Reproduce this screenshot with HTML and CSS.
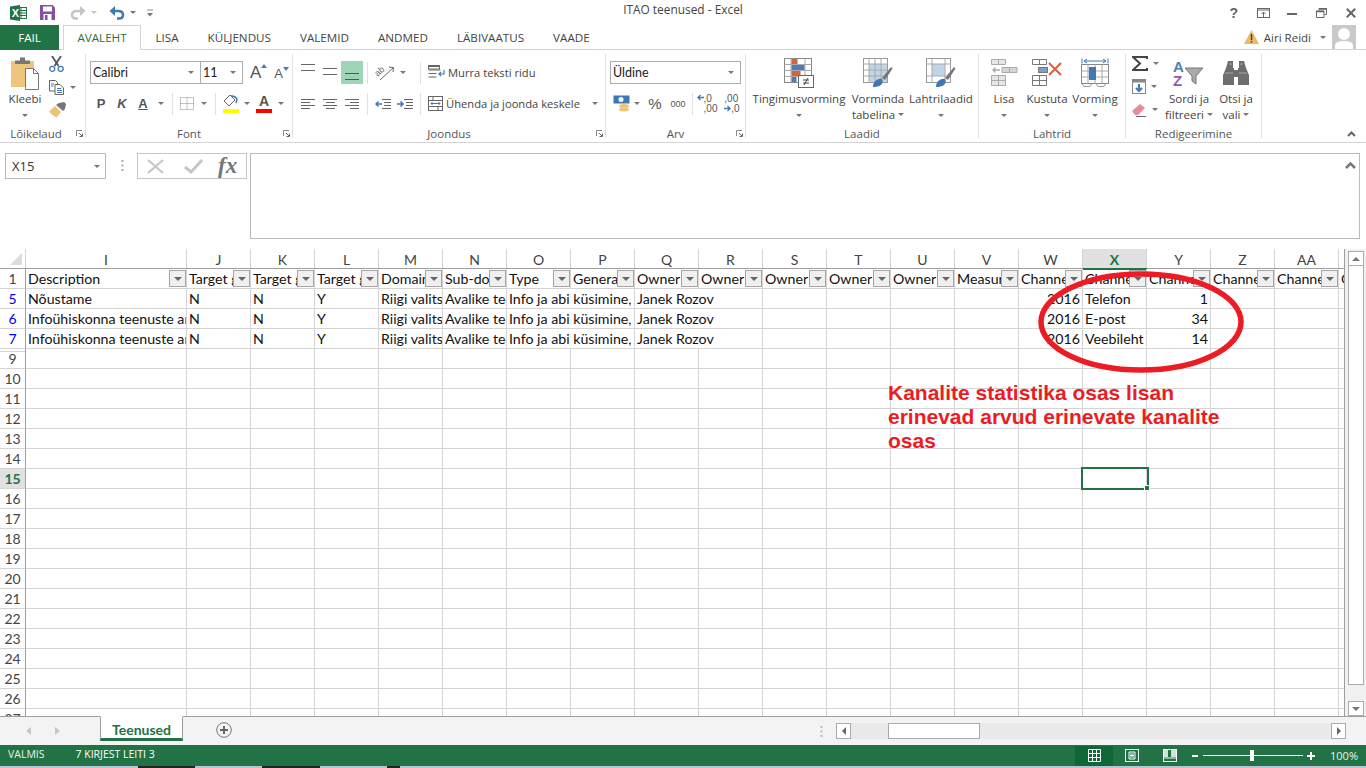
FILE: index.html
```html
<!DOCTYPE html>
<html lang="et">
<head>
<meta charset="utf-8">
<title>ITAO teenused - Excel</title>
<link rel="stylesheet" href="styles.css">
</head>
<body>
<div class="app">
  <header class="titlebar">
    <div class="qat">
      <svg class="q-xl" width="17" height="16" viewBox="0 0 17 16"><rect x="6.5" y="2.5" width="10" height="11" fill="#fff" stroke="#217346"/><path d="M11 2v12M6 5.5h11M6 8h11M6 10.5h11" stroke="#217346" stroke-width="1"/><path d="M0 1.5 10 0v16L0 14.500z" fill="#217346"/><text x="1.800" y="12" class="xl-x">X</text></svg>
      <svg class="q-save" width="15" height="15" viewBox="0 0 15 15"><path d="M0 0h12.500L15 2.500V15H0z" fill="#864ea5"/><rect x="3" y="1.500" width="9" height="5" fill="#fff"/><rect x="3.500" y="9" width="8" height="6" fill="#fff"/><rect x="5" y="10" width="2.500" height="5" fill="#864ea5"/></svg>
      <svg class="q-redo" width="16" height="14" viewBox="0 0 16 14"><path d="M11 5H7C3.500 5 2 7 2 9c0 2 1.500 3.500 4 3.500h2" fill="none" stroke="#c4c4c4" stroke-width="2.500"/><path d="M10 0l5.500 5L10 10z" fill="#c4c4c4"/></svg>
      <span class="caret caret-light q-c1"></span>
      <svg class="q-undo" width="16" height="14" viewBox="0 0 16 14"><path d="M5 5h4c3.500 0 5 2 5 4s-1.500 3.500-4 3.500H8" fill="none" stroke="#3f78b5" stroke-width="2.500"/><path d="M6 0 .5 5 6 10z" fill="#3f78b5"/></svg>
      <span class="caret q-c2"></span>
      <svg class="q-cust" width="6" height="8" viewBox="0 0 7 8"><path d="M0 .5h7" stroke="#777"/><path d="M0 4h7L3.500 8z" fill="#777"/></svg>
    </div>
    <div class="doc-title">ITAO teenused - Excel</div>
    <div class="winctl">
      <span class="help">?</span>
      <svg width="14" height="10" viewBox="0 0 14 10"><rect x=".5" y=".5" width="12" height="9" fill="none" stroke="#666"/><path d="M.5 2h12" stroke="#666"/><path d="M6.500 9V4M4.500 6l2-2 2 2" fill="none" stroke="#666"/></svg>
      <svg width="10" height="10" viewBox="0 0 10 10"><rect y="5" width="10" height="2" fill="#666"/></svg>
      <svg width="11" height="10" viewBox="0 0 11 10"><path d="M3 2V.5h7.500v6H8.500M.5 3h7.500v6.500H.5z" fill="none" stroke="#666"/><path d="M3 1h8M.5 3.500h7.500" stroke="#666" stroke-width="1.500"/></svg>
      <svg width="10" height="10" viewBox="0 0 10 10"><path d="M.8.800l8.400 8.400M9.200.8.800 9.200" stroke="#666" stroke-width="2"/></svg>
    </div>
  </header>

  <nav class="tabs">
    <span class="tab file">FAIL</span>
    <span class="tab active">AVALEHT</span>
    <span class="tab">LISA</span>
    <span class="tab">KÜLJENDUS</span>
    <span class="tab">VALEMID</span>
    <span class="tab">ANDMED</span>
    <span class="tab">LÄBIVAATUS</span>
    <span class="tab">VAADE</span>
    <div class="account">
      <svg width="15" height="14" viewBox="0 0 15 14"><path d="M7.500 0 15 14H0z" fill="#eab96b"/><rect x="6.800" y="4" width="1.500" height="6" fill="#444"/><rect x="6.800" y="11" width="1.500" height="1.500" fill="#444"/></svg>
      <span class="acct-name">Airi Reidi</span>
      <span class="caret"></span>
      <svg class="avatar" width="24" height="24" viewBox="0 0 24 24"><rect width="24" height="24" fill="#c9c9c9"/><circle cx="12" cy="9" r="6" fill="#fff"/><path d="M3 24v-4c0-3 5-4 9-4s9 1 9 4v4z" fill="#fff"/></svg>
    </div>
  </nav>

  <section class="ribbon">
    <div class="grp g-clip">
      <div class="grp-body clip-body">
        <div class="big">
          <div class="big-ico">
            <svg width="30" height="34" viewBox="0 0 30 34"><rect x="1" y="5" width="23" height="26" fill="#eec67b"/><path d="M5 8V4.500h5V1.500h5v3h5V8z" fill="#777"/><path d="M15.500 12.500h8l5 5v16h-13z" fill="#fff" stroke="#777"/><path d="M23.500 12.500v5h5" fill="none" stroke="#777"/></svg>
          </div>
          <div class="big-t">Kleebi</div>
          <div class="big-t"><span class="caret"></span></div>
        </div>
        <div class="small-col">
          <svg width="15" height="16" viewBox="0 0 15 16"><path d="M3 0l6.500 10M12 0 5.500 10" stroke="#555" stroke-width="1.800"/><circle cx="3.300" cy="12.800" r="2.500" fill="#fff" stroke="#3f78b5" stroke-width="1.300"/><circle cx="11.700" cy="12.800" r="2.500" fill="#fff" stroke="#3f78b5" stroke-width="1.300"/></svg>
          <div class="with-caret">
            <svg width="16" height="15" viewBox="0 0 16 15"><path d="M.5.500h6l2 2V11H.5z" fill="#fff" stroke="#666"/><path d="M6 4.500h5l3.500 3.500v6.500H6z" fill="#fff" stroke="#666"/><path d="M8 8.500h4M8 10.500h5M8 12.500h5M2 4h3M2 6h2.500" stroke="#3f78b5"/></svg>
            <span class="caret"></span>
          </div>
          <svg width="17" height="16" viewBox="0 0 17 16"><path d="M0 9.500 6 4l6 6-4.500 5.500C5 14 2 12 0 9.500z" fill="#edc27c"/><path d="M7 3l3-2 5-1 2 2-1 5-2 2z" fill="#777"/></svg>
        </div>
      </div>
      <div class="grp-label">Lõikelaud<svg class="launch" width="7" height="7" viewBox="0 0 7 7"><path d="M.5 6V.5H6" fill="none" stroke="#888"/><path d="M3 3l3 3M6.500 3.500v3h-3" fill="none" stroke="#666"/></svg></div>
    </div>

    <div class="grp g-font">
      <div class="grp-body font-body">
        <div class="font-r1">
          <div class="combo c-font"><span>Calibri</span><span class="caret"></span></div>
          <div class="combo c-size"><span>11</span><span class="caret"></span></div>
          <span class="aa aa-big">A<svg width="6" height="4" viewBox="0 0 6 4"><path d="M3 0l3 4H0z" fill="#4a7ebb"/></svg></span>
          <span class="aa aa-small">A<svg width="6" height="4" viewBox="0 0 6 4"><path d="M3 4 6 0H0z" fill="#4a7ebb"/></svg></span>
        </div>
        <div class="font-r2">
          <b class="fmt">P</b>
          <b class="fmt ital">K</b>
          <b class="fmt undl">A</b>
          <span class="caret"></span>
          <i class="sep"></i>
          <svg width="14" height="13" viewBox="0 0 14 13"><rect x=".5" y=".5" width="13" height="12" fill="none" stroke="#888" stroke-dasharray="1 1"/><path d="M7 .5v12M.5 6.500h13" stroke="#888" stroke-dasharray="1 1"/></svg>
          <span class="caret"></span>
          <i class="sep"></i>
          <svg width="16" height="20" viewBox="0 0 16 20"><path d="M7 1 1 7l5 5 6-6z" fill="#fff" stroke="#666"/><path d="M8 2c3 0 5 1 6 3l-1 4" fill="none" stroke="#3f78b5" stroke-width="1.500"/><rect y="15" width="16" height="4" fill="#ffff00"/></svg>
          <span class="caret"></span>
          <span class="fcolor"><b>A</b><i></i></span>
          <span class="caret"></span>
        </div>
      </div>
      <div class="grp-label">Font<svg class="launch" width="7" height="7" viewBox="0 0 7 7"><path d="M.5 6V.5H6" fill="none" stroke="#888"/><path d="M3 3l3 3M6.500 3.500v3h-3" fill="none" stroke="#666"/></svg></div>
    </div>

    <div class="grp g-align">
      <div class="grp-body align-body">
        <svg class="al-top" width="15" height="9" viewBox="0 0 15 9"><path d="M0 .5h14M0 6.500h14" stroke="#666"/></svg>
        <svg class="al-mid" width="15" height="9" viewBox="0 0 15 9"><path d="M0 .5h14M0 6.500h14" stroke="#666"/></svg>
        <span class="al-on"><svg width="15" height="9" viewBox="0 0 15 9"><path d="M0 .5h14M0 6.500h14" stroke="#555"/></svg></span>
        <i class="sep"></i>
        <div class="with-caret orient">
          <svg width="20" height="18" viewBox="0 0 20 18"><text x="0" y="10" class="ab" transform="rotate(-40 5 8)">ab</text><path d="M5 16 18 4" stroke="#666"/><path d="M14 3l4.500 0.500L18 8" fill="none" stroke="#666"/></svg>
          <span class="caret"></span>
        </div>
        <i class="sep"></i>
        <div class="wide-btn">
          <svg width="17" height="15" viewBox="0 0 17 15"><path d="M.5 1.500h11M.5 5h12M.5 8.500h8M.5 12h8" stroke="#666"/><rect x=".5" y=".5" width="11" height="3.500" fill="none" stroke="#666"/><path d="M16 5v4h-5M13 7l-2 2 2 2" fill="none" stroke="#3f78b5" stroke-width="1.200"/></svg>
          <span>Murra teksti ridu</span>
        </div>

        <svg width="15" height="10" viewBox="0 0 15 10"><path d="M0 .5h14M0 3.500h9M0 6.500h14M0 9.500h9" stroke="#666"/></svg>
        <svg width="15" height="10" viewBox="0 0 15 10"><path d="M0 .5h14M3 3.500h9M0 6.500h14M3 9.500h9" stroke="#666"/></svg>
        <svg width="15" height="10" viewBox="0 0 15 10"><path d="M0 .5h14M5 3.500h9M0 6.500h14M5 9.500h9" stroke="#666"/></svg>
        <i class="sep"></i>
        <div class="indents">
          <svg width="16" height="10" viewBox="0 0 16 10"><path d="M7 .5h9M9 3.500h7M9 6.500h7M7 9.500h9" stroke="#666"/><path d="M7 5H1M3.500 2.500 1 5l2.500 2.500" fill="none" stroke="#3f78b5" stroke-width="1.500"/></svg>
          <svg width="16" height="10" viewBox="0 0 16 10"><path d="M7 .5h9M9 3.500h7M9 6.500h7M7 9.500h9" stroke="#666"/><path d="M0 5h6M3.500 2.500 6 5 3.500 7.500" fill="none" stroke="#3f78b5" stroke-width="1.500"/></svg>
        </div>
        <i class="sep"></i>
        <div class="wide-btn">
          <svg width="15" height="15" viewBox="0 0 15 15"><rect x=".5" y=".5" width="14" height="14" fill="none" stroke="#666"/><path d="M.5 4.500h14M.5 10.500h14M5 .5v4M10 10.500v4" stroke="#666"/><path d="M3 7.500h9M4.500 6 3 7.500 4.500 9M10.500 6 12 7.500 10.500 9" fill="none" stroke="#3f78b5"/></svg>
          <span>Ühenda ja joonda keskele</span>
          <span class="caret merge-caret"></span>
        </div>
      </div>
      <div class="grp-label">Joondus<svg class="launch" width="7" height="7" viewBox="0 0 7 7"><path d="M.5 6V.5H6" fill="none" stroke="#888"/><path d="M3 3l3 3M6.500 3.500v3h-3" fill="none" stroke="#666"/></svg></div>
    </div>

    <div class="grp g-num">
      <div class="grp-body num-body">
        <div class="combo c-num"><span>Üldine</span><span class="caret"></span></div>
        <div class="num-r2">
          <div class="with-caret cur">
            <svg width="17" height="18" viewBox="0 0 17 18"><rect x=".5" y=".5" width="16" height="8" fill="#3f78b5"/><circle cx="8" cy="4.500" r="2.500" fill="#fff"/><ellipse cx="11" cy="11" rx="5" ry="2" fill="#eec67b"/><ellipse cx="11" cy="14.500" rx="5" ry="2" fill="#eec67b"/></svg>
            <span class="caret"></span>
          </div>
          <span class="pct">%</span>
          <span class="thou">000</span>
          <i class="sep"></i>
          <div class="dec"><svg width="7" height="7" viewBox="0 0 7 7"><path d="M7 3.500H1M3.500 1 1 3.500 3.500 6" fill="none" stroke="#3f78b5" stroke-width="1.300"/></svg><span>,0<br>,00</span></div>
          <div class="dec"><span>,00<br><svg width="7" height="7" viewBox="0 0 7 7"><path d="M0 3.500h6M3.500 1 6 3.500 3.500 6" fill="none" stroke="#3f78b5" stroke-width="1.300"/></svg>,0</span></div>
        </div>
      </div>
      <div class="grp-label">Arv<svg class="launch" width="7" height="7" viewBox="0 0 7 7"><path d="M.5 6V.5H6" fill="none" stroke="#888"/><path d="M3 3l3 3M6.500 3.500v3h-3" fill="none" stroke="#666"/></svg></div>
    </div>

    <div class="grp g-styles">
      <div class="grp-body big-row styles-row">
        <div class="big">
          <div class="big-ico"><svg width="30" height="30" viewBox="0 0 30 30"><rect x=".5" y=".5" width="27" height="24" fill="#fff" stroke="#888"/><path d="M7 .5v24M21 .5v24M.5 6.500h27M.5 12.500h27M.5 18.500h27" stroke="#aaa"/><rect x="7.500" y="1" width="6" height="5" fill="#d9603b"/><rect x="7.500" y="7" width="13" height="5" fill="#4a7ebb"/><rect x="7.500" y="13" width="9" height="5" fill="#d9603b"/><rect x="7.500" y="19" width="5" height="5" fill="#4a7ebb"/><rect x="14.500" y="17.500" width="15" height="12" fill="#fff" stroke="#666"/><path d="M19 22h6M19 25h6M24 20l-4 7" stroke="#444"/></svg></div>
          <div class="big-t">Tingimusvorming</div>
          <div class="big-t"><span class="caret"></span></div>
        </div>
        <div class="big">
          <div class="big-ico"><svg width="30" height="30" viewBox="0 0 30 30"><rect x=".5" y=".5" width="24" height="24" fill="#fff" stroke="#999"/><rect x="6" y="6" width="18" height="18" fill="#c2d4e8"/><path d="M6 .5v24M12 .5v24M18 .5v24M.5 6h24M.5 12h24M.5 18h24" stroke="#aaa"/><path d="M19 20 28 9l1.500 1.500L22 22z" fill="#777"/><path d="M10 29c0-5 4-9 9-8 1 2 1 4-1 6-2 1.500-5 2-8 2z" fill="#3f78b5"/></svg></div>
          <div class="big-t">Vorminda</div>
          <div class="big-t">tabelina<span class="caret inl"></span></div>
        </div>
        <div class="big">
          <div class="big-ico"><svg width="30" height="30" viewBox="0 0 30 30"><rect x=".5" y=".5" width="24" height="24" fill="#fff" stroke="#999"/><rect x="6" y="6" width="13" height="12" fill="#c2d4e8"/><path d="M6 .5v24M19 .5v24M.5 6h24M.5 18h24" stroke="#aaa"/><path d="M19 20 28 9l1.500 1.500L22 22z" fill="#777"/><path d="M10 29c0-5 4-9 9-8 1 2 1 4-1 6-2 1.500-5 2-8 2z" fill="#3f78b5"/></svg></div>
          <div class="big-t">Lahtrilaadid</div>
          <div class="big-t"><span class="caret"></span></div>
        </div>
      </div>
      <div class="grp-label">Laadid</div>
    </div>

    <div class="grp g-cells">
      <div class="grp-body big-row cells-row">
        <div class="big">
          <div class="big-ico"><svg width="27" height="28" viewBox="0 0 27 28"><path d="M.5.500h14v5H.5zM7.500.5v5M.5 16.500h14v10H.5zM7.500 16.500v10M.5 21.500h14" fill="#e9e5e9" stroke="#aaa"/><path d="M11 8.500h15v5H11zM18.500 8.500v5" fill="#d8d2d8" stroke="#aaa"/><path d="M9 11H2M4.500 8.500 2 11l2.500 2.500" fill="none" stroke="#aaa" stroke-width="1.300"/></svg></div>
          <div class="big-t">Lisa</div>
          <div class="big-t"><span class="caret"></span></div>
        </div>
        <div class="big">
          <div class="big-ico"><svg width="30" height="28" viewBox="0 0 30 28"><path d="M.5.500h14v5H.5zM7.500.5v5M.5 16.500h14v10H.5zM7.500 16.500v10M.5 21.500h14" fill="#fff" stroke="#777"/><rect x="6.500" y="8.500" width="9" height="5" fill="#7ba0c9" stroke="#777"/><path d="M17 4l12 12M29 4 17 16" stroke="#d9603b" stroke-width="2"/></svg></div>
          <div class="big-t">Kustuta</div>
          <div class="big-t"><span class="caret"></span></div>
        </div>
        <div class="big">
          <div class="big-ico"><svg width="28" height="30" viewBox="0 0 28 30"><path d="M1 .5v5M27 .5v5" stroke="#3f78b5"/><path d="M3 3h22M6 1 3 3l3 2M22 1l3 2-3 2" fill="none" stroke="#3f78b5"/><rect x=".5" y="6.500" width="27" height="19" fill="#fff" stroke="#888"/><path d="M7 6.500v19M14 6.500v19M21 6.500v19M.5 13h27M.5 19h27" stroke="#aaa"/><rect x="8" y="9" width="7" height="13" fill="#3f78b5"/><path d="M1 25.500l2 3h6l2-3M15 25.500l2 3h6l2-3" fill="none" stroke="#999"/></svg></div>
          <div class="big-t">Vorming</div>
          <div class="big-t"><span class="caret"></span></div>
        </div>
      </div>
      <div class="grp-label">Lahtrid</div>
    </div>

    <div class="grp g-edit">
      <div class="grp-body big-row edit-row">
        <div class="edit-small">
          <div class="with-caret">
            <svg width="16" height="15" viewBox="0 0 16 15"><path d="M15 3V1H1l7 6.500L1 14h14v-2" fill="none" stroke="#444" stroke-width="2"/></svg>
            <span class="caret"></span>
          </div>
          <div class="with-caret">
            <svg width="14" height="15" viewBox="0 0 14 15"><rect x=".5" y=".5" width="13" height="14" fill="#fff" stroke="#888"/><rect x=".5" y=".5" width="13" height="3" fill="#888"/><path d="M7 5v7M4 9l3 3 3-3" fill="none" stroke="#3f78b5" stroke-width="2"/></svg>
            <span class="caret"></span>
          </div>
          <div class="with-caret">
            <svg width="15" height="15" viewBox="0 0 15 15"><path d="M0 9l8-7 5 4-7 7H3z" fill="#e98a9b"/><path d="M4 14.500h10" stroke="#666"/></svg>
            <span class="caret"></span>
          </div>
        </div>
        <div class="big">
          <div class="big-ico"><svg width="32" height="28" viewBox="0 0 32 28"><text x="0" y="13" class="az az-a">A</text><text x="0" y="27" class="az az-z">Z</text><path d="M12 9h18l-7 8v8l-4-3v-5z" fill="#aaa" stroke="#777"/></svg></div>
          <div class="big-t">Sordi ja</div>
          <div class="big-t">filtreeri<span class="caret inl"></span></div>
        </div>
        <div class="big">
          <div class="big-ico"><svg width="26" height="24" viewBox="0 0 26 24"><path d="M3 7 5 0h5v7h1v17H0V14zM23 7 21 0h-5v7h-1v17h11V14z" fill="#6e6e6e"/><path d="M11 9h4v7h-4z" fill="#6e6e6e"/><path d="M2 12h8M16 12h8M6 3h3M17 3h3" stroke="#a8a8a8"/></svg></div>
          <div class="big-t">Otsi ja</div>
          <div class="big-t">vali<span class="caret inl"></span></div>
        </div>
      </div>
      <div class="grp-label">Redigeerimine</div>
    </div>
    <svg class="collapse" width="9" height="6" viewBox="0 0 9 6"><path d="M1 5l3.500-3.500L8 5" fill="none" stroke="#666" stroke-width="2"/></svg>
  </section>

  <section class="formula">
    <div class="namebox"><span>X15</span><span class="caret"></span></div>
    <svg class="grip" width="3" height="11" viewBox="0 0 3 11"><path d="M1.500 0v2M1.500 4.500v2M1.500 9v2" stroke="#aaa" stroke-width="2"/></svg>
    <div class="fx-btns">
      <svg width="17" height="15" viewBox="0 0 17 15"><path d="M1 1l15 13M16 1 1 14" stroke="#c6c6c6" stroke-width="2.200"/></svg>
      <svg width="19" height="15" viewBox="0 0 19 15"><path d="M1 8l6 5L18 1" fill="none" stroke="#c6c6c6" stroke-width="3"/></svg>
      <span class="fx">fx</span>
    </div>
    <div class="fx-input"><svg width="11" height="7" viewBox="0 0 11 7"><path d="M1 6l4.500-4.500L10 6" fill="none" stroke="#777" stroke-width="2.500"/></svg></div>
  </section>

  <main class="sheet">
    <div class="grid">
      <div class="row colhead">
        <div class="corner"><i></i></div>
        <div class="ch wI">I</div><div class="ch">J</div><div class="ch">K</div><div class="ch">L</div><div class="ch">M</div><div class="ch">N</div><div class="ch">O</div><div class="ch">P</div><div class="ch">Q</div><div class="ch">R</div><div class="ch">S</div><div class="ch">T</div><div class="ch">U</div><div class="ch">V</div><div class="ch">W</div><div class="ch sel">X</div><div class="ch">Y</div><div class="ch">Z</div><div class="ch">AA</div>
      </div>
      <div class="row">
        <div class="rh">1</div>
        <div class="c wI hd"><span>Description</span><b class="fb"></b></div>
        <div class="c hd"><span>Target group</span><b class="fb"></b></div>
        <div class="c hd"><span>Target group</span><b class="fb"></b></div>
        <div class="c hd"><span>Target group</span><b class="fb"></b></div>
        <div class="c hd"><span>Domain</span><b class="fb"></b></div>
        <div class="c hd"><span>Sub-domain</span><b class="fb"></b></div>
        <div class="c hd"><span>Type</span><b class="fb"></b></div>
        <div class="c hd"><span>General</span><b class="fb"></b></div>
        <div class="c hd"><span>Owner</span><b class="fb"></b></div>
        <div class="c hd"><span>Owner</span><b class="fb"></b></div>
        <div class="c hd"><span>Owner</span><b class="fb"></b></div>
        <div class="c hd"><span>Owner</span><b class="fb"></b></div>
        <div class="c hd"><span>Owner</span><b class="fb"></b></div>
        <div class="c hd"><span>Measure</span><b class="fb"></b></div>
        <div class="c hd"><span>Channel</span><b class="fb"></b></div>
        <div class="c hd"><span>Channel</span><b class="fb"></b></div>
        <div class="c hd"><span>Channel</span><b class="fb"></b></div>
        <div class="c hd"><span>Channel</span><b class="fb"></b></div>
        <div class="c hd"><span>Channel</span><b class="fb"></b></div>
        <div class="c hd last"><span>Channel</span></div>
      </div>
      <div class="row">
        <div class="rh flt">5</div>
        <div class="c wI"><span>Nõustame</span></div>
        <div class="c"><span>N</span></div><div class="c"><span>N</span></div><div class="c"><span>Y</span></div>
        <div class="c"><span>Riigi valitsemine</span></div><div class="c"><span>Avalike teenuste</span></div>
        <div class="c w2"><span>Info ja abi küsimine,</span></div><div class="c w2"><span>Janek Rozov</span></div>
        <div class="fill w4"></div>
        <div class="c num"><span>2016</span></div><div class="c"><span>Telefon</span></div><div class="c num"><span>1</span></div>
        <div class="fill"></div>
      </div>
      <div class="row">
        <div class="rh flt">6</div>
        <div class="c wI"><span>Infoühiskonna teenuste arendamine</span></div>
        <div class="c"><span>N</span></div><div class="c"><span>N</span></div><div class="c"><span>Y</span></div>
        <div class="c"><span>Riigi valitsemine</span></div><div class="c"><span>Avalike teenuste</span></div>
        <div class="c w2"><span>Info ja abi küsimine,</span></div><div class="c w2"><span>Janek Rozov</span></div>
        <div class="fill w4"></div>
        <div class="c num"><span>2016</span></div><div class="c"><span>E-post</span></div><div class="c num"><span>34</span></div>
        <div class="fill"></div>
      </div>
      <div class="row">
        <div class="rh flt">7</div>
        <div class="c wI"><span>Infoühiskonna teenuste arendamine</span></div>
        <div class="c"><span>N</span></div><div class="c"><span>N</span></div><div class="c"><span>Y</span></div>
        <div class="c"><span>Riigi valitsemine</span></div><div class="c"><span>Avalike teenuste</span></div>
        <div class="c w2"><span>Info ja abi küsimine,</span></div><div class="c w2"><span>Janek Rozov</span></div>
        <div class="fill w4"></div>
        <div class="c num"><span>2016</span></div><div class="c"><span>Veebileht</span></div><div class="c num"><span>14</span></div>
        <div class="fill"></div>
      </div>
      <div class="row"><div class="rh gap">9</div><div class="c wI"></div><div class="fill"></div></div>
      <div class="row"><div class="rh">10</div><div class="c wI"></div><div class="fill"></div></div>
      <div class="row"><div class="rh">11</div><div class="c wI"></div><div class="fill"></div></div>
      <div class="row"><div class="rh">12</div><div class="c wI"></div><div class="fill"></div></div>
      <div class="row"><div class="rh">13</div><div class="c wI"></div><div class="fill"></div></div>
      <div class="row"><div class="rh">14</div><div class="c wI"></div><div class="fill"></div></div>
      <div class="row"><div class="rh cur">15</div><div class="c wI"></div><div class="fill"></div></div>
      <div class="row"><div class="rh">16</div><div class="c wI"></div><div class="fill"></div></div>
      <div class="row"><div class="rh">17</div><div class="c wI"></div><div class="fill"></div></div>
      <div class="row"><div class="rh">18</div><div class="c wI"></div><div class="fill"></div></div>
      <div class="row"><div class="rh">19</div><div class="c wI"></div><div class="fill"></div></div>
      <div class="row"><div class="rh">20</div><div class="c wI"></div><div class="fill"></div></div>
      <div class="row"><div class="rh">21</div><div class="c wI"></div><div class="fill"></div></div>
      <div class="row"><div class="rh">22</div><div class="c wI"></div><div class="fill"></div></div>
      <div class="row"><div class="rh">23</div><div class="c wI"></div><div class="fill"></div></div>
      <div class="row"><div class="rh">24</div><div class="c wI"></div><div class="fill"></div></div>
      <div class="row"><div class="rh">25</div><div class="c wI"></div><div class="fill"></div></div>
      <div class="row"><div class="rh">26</div><div class="c wI"></div><div class="fill"></div></div>
      <div class="row"><div class="rh">27</div><div class="c wI"></div><div class="fill"></div></div>

      <div class="selbox"><i></i></div>
      <svg class="ring" width="210" height="104" viewBox="0 0 210 104"><ellipse cx="105" cy="52" rx="100" ry="48" fill="none" stroke="#ed1c24" stroke-width="5.500"/></svg>
      <div class="note">Kanalite statistika osas lisan erinevad arvud erinevate kanalite osas</div>
    </div>
    <aside class="vscroll">
      <div class="sb-btn"><span class="tri-up"></span></div>
      <div class="sb-thumb"></div>
      <div class="sb-track"></div>
      <div class="sb-btn"><span class="tri-down"></span></div>
    </aside>
  </main>

  <section class="sheetbar">
    <span class="nav-l"></span>
    <span class="nav-r"></span>
    <div class="sheet-tab">Teenused</div>
    <svg class="addsheet" width="16" height="16" viewBox="0 0 16 16"><circle cx="8" cy="8" r="7.300" fill="none" stroke="#777"/><path d="M8 4v8M4 8h8" stroke="#666" stroke-width="2"/></svg>
    <svg class="hgrip" width="3" height="11" viewBox="0 0 3 11"><path d="M1.500 0v2M1.500 4.500v2M1.500 9v2" stroke="#bbb" stroke-width="2"/></svg>
    <div class="hscroll">
      <div class="hb"><span class="tri-left"></span></div>
      <div class="h-gap1"></div>
      <div class="h-thumb"></div>
      <div class="h-gap2"></div>
      <div class="hb"><span class="tri-right"></span></div>
    </div>
  </section>

  <footer class="status">
    <span class="st-a">VALMIS</span>
    <span class="st-b">7 KIRJEST LEITI 3</span>
    <div class="st-right">
      <span class="view on"><svg width="13" height="13" viewBox="0 0 13 13"><path d="M.5.500h12v12H.5zM4.500.5v12M8.500.5v12M.5 4.500h12M.5 8.500h12" fill="none" stroke="#fff"/></svg></span>
      <span class="view"><svg width="14" height="13" viewBox="0 0 14 13"><rect x=".5" y=".5" width="13" height="12" fill="none" stroke="#fff"/><path d="M4 3h6v7H4zM5 5h4M5 6.500h4M5 8h4" fill="none" stroke="#fff"/></svg></span>
      <span class="view"><svg width="14" height="13" viewBox="0 0 14 13"><rect x=".5" y=".5" width="13" height="12" fill="none" stroke="#fff"/><path d="M1 1h4v7H1zM8 1h5v7H8z" fill="#cfe3d8"/><path d="M1 9h12" stroke="#fff"/></svg></span>
      <span class="z-minus"></span>
      <div class="z-slider"><i></i></div>
      <span class="z-plus"></span>
      <span class="z-val">100%</span>
    </div>
  </footer>
  <div class="strip"></div>
</div>
</body>
</html>
```
FILE: styles.css
```css
* { box-sizing: border-box; }
html, body { margin: 0; padding: 0; }
body { width: 1366px; height: 768px; overflow: hidden; background: #fff; font-family: "Open Sans", "Noto Sans", sans-serif; font-size: 11.5px; color: #444; }
.app { width: 1366px; height: 768px; display: flex; flex-direction: column; }
svg { display: block; flex: none; }
i, b { font-style: normal; }

.caret { display: inline-block; flex: none; width: 0; height: 0; border-left: 3.500px solid transparent; border-right: 3.500px solid transparent; border-top: 3.500px solid #777; }
.caret-light { border-top-color: #c4c4c4; }
.caret.inl { margin: 0 0 2px 3px; vertical-align: middle; }
.sep { display: block; width: 1px; height: 22px; background: #e1e1e1; justify-self: center; }

/* title bar */
.titlebar { flex: none; height: 25px; position: relative; display: flex; align-items: center; }
.qat { display: flex; align-items: center; padding-left: 10px; height: 25px; }
.q-save { margin-left: 13px; }
.q-redo { margin-left: 15px; }
.q-c1 { margin-left: 5px; }
.q-undo { margin-left: 12px; }
.q-c2 { margin-left: 5px; }
.q-cust { margin-left: 11px; }
.xl-x { font: bold 11px "Liberation Sans", sans-serif; fill: #fff; }
.doc-title { position: absolute; left: 0; right: 0; top: -1px; text-align: center; font-size: 11.900px; line-height: 20px; color: #444; }
.winctl { margin-left: auto; display: flex; align-items: center; height: 25px; padding-right: 10px; gap: 0; }
.help { font: bold 14px "Liberation Sans", sans-serif; color: #666; margin-right: 4px; }
.winctl svg:nth-of-type(1) { margin-left: 15px; }
.winctl svg:nth-of-type(2) { margin-left: 16px; }
.winctl svg:nth-of-type(3) { margin-left: 19px; }
.winctl svg:nth-of-type(4) { margin-left: 19px; }

/* tabs */
.tabs { flex: none; height: 25px; display: flex; border-bottom: 1px solid #d4d4d4; position: relative; align-items: stretch; }
.tab { padding: 0 14.500px; line-height: 25px; font-size: 11.650px; color: #444; white-space: nowrap; }
.tab.file { width: 59px; padding: 0; margin-right: 4px; text-align: center; background: #217346; color: #fff; height: 25px; }
.tab.active { width: 78px; padding: 0; text-align: center; color: #217346; background: #fff; border: 1px solid #d4d4d4; border-bottom: 0; height: 25px; line-height: 24px; margin-right: 0; }
.account { margin-left: auto; display: flex; align-items: center; padding-right: 10px; }
.acct-name { margin: 0 9px 0 5px; font-size: 11.500px; }
.avatar { margin-left: 6px; align-self: flex-end; }

/* ribbon */
.ribbon { flex: none; height: 93px; display: flex; border-bottom: 1px solid #d4d4d4; padding-top: 4px; position: relative; align-items: flex-start; }
.grp { flex: none; height: 84px; border-right: 1px solid #e1e1e1; display: flex; flex-direction: column; }
.g-clip { width: 86px; } .g-font { width: 207px; } .g-align { width: 313px; } .g-num { width: 140px; } .g-styles { width: 233px; } .g-cells { width: 147px; } .g-edit { width: 136px; }
.grp-body { flex: none; height: 72px; }
.grp-label { flex: none; height: 12px; line-height: 16px; text-align: center; font-size: 11.500px; color: #555; position: relative; }
.launch { position: absolute; right: 2px; top: 4px; }
.g-clip .grp-label { padding-right: 13px; }

.big { display: flex; flex-direction: column; align-items: center; }
.big-ico { height: 37px; display: flex; align-items: center; justify-content: center; }
.big-t { height: 16px; line-height: 16px; white-space: nowrap; font-size: 11.500px; display: flex; align-items: center; color: #444; }
.big-row { display: grid; padding-left: 6px; align-items: start; }
.styles-row { grid-template-columns: 94px 64px 62px; }
.cells-row { grid-template-columns: 38px 48px 48px; }
.edit-row { grid-template-columns: 30px 54px 40px; }
.with-caret { display: flex; align-items: center; gap: 5px; }

.clip-body { display: grid; grid-template-columns: 38px 36px; gap: 5px; padding-left: 6px; }
.small-col { display: flex; flex-direction: column; justify-content: space-between; height: 64px; padding-top: 2px; }

.font-body { padding: 7px 0 0 4px; display: flex; flex-direction: column; gap: 8px; }
.font-r1 { display: flex; align-items: center; height: 23px; }
.combo { height: 23px; border: 1px solid #ababab; display: flex; align-items: center; justify-content: space-between; padding: 0 6px 0 2px; font: 12.500px Lato, "Liberation Sans", sans-serif; color: #222; background: #fff; }
.c-font { width: 111px; }
.c-size { width: 43px; margin-left: -1px; }
.aa { display: flex; align-items: flex-start; font: 16px "Liberation Sans", sans-serif; color: #555; }
.aa-big { margin-left: 7px; font-size: 17px; }
.aa-small { margin-left: 7px; font-size: 13px; padding-top: 2px; }
.aa svg { margin-top: 1px; }
.font-r2 { display: grid; grid-template-columns: 22px 20px 22px 14px 8px 22px 12px 10px 22px 10px 24px 10px; align-items: center; justify-items: center; height: 23px; }
.fmt { font: bold 13px "Liberation Sans", sans-serif; color: #555; }
.ital { font-style: italic; }
.undl { text-decoration: underline; }
.fcolor { display: flex; flex-direction: column; align-items: center; }
.fcolor b { font: bold 14px/15px "Liberation Sans", sans-serif; color: #555; }
.fcolor i { width: 16px; height: 4px; background: #ff0000; }

.align-body { display: grid; grid-template-columns: 22px 22px 22px 8px 46px 6px 1fr; grid-template-rows: 23px 23px; row-gap: 8px; padding: 7px 0 0 4px; align-items: center; justify-items: center; }
.al-top { align-self: start; margin-top: 3px; }
.al-mid { align-self: start; margin-top: 7px; }
.al-on { width: 22px; height: 23px; background: #9fd5b7; display: flex; align-items: flex-end; justify-content: center; padding-bottom: 2px; }
.ab { font: 9px "Liberation Sans", sans-serif; fill: #666; }
.orient { padding-left: 4px; width: 46px; }
.indents { display: flex; gap: 6px; justify-self: start; padding-left: 4px; }
.wide-btn { display: flex; align-items: center; gap: 3px; justify-self: start; padding-left: 5px; white-space: nowrap; font-size: 11.200px; }
.merge-caret { margin-left: 9px; }

.num-body { padding: 7px 0 0 4px; display: flex; flex-direction: column; gap: 8px; }
.c-num { width: 131px; }
.num-r2 { display: grid; grid-template-columns: 35px 20px 26px 3px 26px 24px; align-items: center; justify-items: center; height: 23px; }
.cur { gap: 4px; padding-left: 3px; width: 35px; }
.pct { font: 15px "Liberation Sans", sans-serif; color: #555; }
.thou { font: 9px "Liberation Sans", sans-serif; color: #555; }
.dec { display: flex; align-items: flex-start; font: 10px/10px "Liberation Sans", sans-serif; color: #555; }
.dec span { display: block; }
.dec span svg { display: inline-block; }

.edit-small { display: flex; flex-direction: column; gap: 8px; padding-top: 2px; }
.az { font: bold 15px "Liberation Sans", sans-serif; }
.az-a { fill: #4a7ebb; }
.az-z { fill: #8e5cab; }
.collapse { position: absolute; left: 1347px; top: 81px; }

/* formula */
.formula { flex: none; height: 106px; display: flex; align-items: flex-start; padding: 10px 6px 0 5px; }
.namebox { width: 101px; height: 26px; border: 1px solid #bbb; display: flex; align-items: center; justify-content: space-between; padding: 0 5px 0 6px; font-size: 13px; color: #333; }
.grip { margin: 7px 13px 0 15px; }
.fx-btns { width: 110px; height: 26px; border: 1px solid #c6c6c6; display: flex; align-items: center; gap: 20px; padding-left: 9px; }
.fx { font: italic bold 23px/24px "Liberation Serif", serif; color: #777; margin-left: -5px; }
.fx-input { margin-left: 3px; width: 1110px; height: 86px; border: 1px solid #bbb; display: flex; justify-content: flex-end; padding: 8px 3px 0 0; }

/* sheet */
.sheet { flex: 1; min-height: 0; display: flex; overflow: hidden; border-bottom: 1px solid #9e9e9e; }
.grid { width: 1345px; position: relative; overflow: hidden; font: 14.200px Lato, "Liberation Sans", sans-serif; color: #111; border-right: 1px solid #9e9e9e; }
.row { display: flex; height: 20px; }
.colhead { border-bottom: 1px solid #9e9e9e; }
.corner { width: 26px; height: 19px; position: relative; border-right: 1px solid #d4d4d4; }
.corner i { position: absolute; right: 3px; bottom: 3px; width: 0; height: 0; border-left: 12px solid transparent; border-bottom: 12px solid #dcdcdc; }
.ch { flex: none; width: 64px; height: 19px; line-height: 21px; text-align: center; border-right: 1px solid #d4d4d4; color: #444; font-size: 14px; }
.ch.wI, .c.wI { width: 161px; }
.ch.sel { background: #e1e1e1; color: #217346; font-weight: bold; position: relative; box-shadow: 0 2px 0 #217346; }
.rh { flex: none; width: 26px; height: 20px; line-height: 19px; text-align: center; border-right: 1px solid #9e9e9e; border-bottom: 1px solid #d4d4d4; color: #444; font-size: 14px; padding-left: 0; }
.rh.flt { color: #0000ff; }
.rh.cur { background: #e1e1e1; color: #217346; font-weight: bold; }
.rh.gap { box-shadow: inset 0 2px 0 #fff, inset 0 3px 0 #d4d4d4; }
.c { flex: none; width: 64px; height: 20px; line-height: 19px; border-right: 1px solid #d4d4d4; border-bottom: 1px solid #d4d4d4; padding-left: 2px; display: flex; overflow: hidden; white-space: nowrap; }
.c span { flex: 1 1 0; min-width: 0; overflow: hidden; }
.c.w2 { width: 128px; }
.c.num { justify-content: flex-end; padding: 0 2px 0 0; text-align: right; }
.c.last { width: 10px; }
.hd { position: relative; }
.fb { flex: none; align-self: flex-end; margin: 0 0 1px 0; width: 17px; height: 17px; background: #f0f0f0; border: 1px solid #a6a6a6; display: flex; align-items: center; justify-content: center; }
.fb::after { content: ""; width: 0; height: 0; border-left: 4px solid transparent; border-right: 4px solid transparent; border-top: 4px solid #666; }
.fill { flex: 1; height: 20px; border-bottom: 1px solid #d4d4d4; background: repeating-linear-gradient(to right, transparent 0 63px, #d4d4d4 63px 64px); }
.fill.w4 { flex: none; width: 256px; }

.selbox { position: absolute; left: 1081px; top: 218px; width: 68px; height: 23px; border: 2px solid #217346; }
.selbox i { position: absolute; right: -3px; bottom: -3px; width: 6px; height: 6px; background: #217346; border: 1px solid #fff; }
.ring { position: absolute; left: 1036px; top: 21px; }
.note { position: absolute; left: 888px; top: 132px; width: 345px; font: bold 21px/24px "Liberation Sans", Arial, sans-serif; color: #ed1c24; }

.vscroll { flex: 1; display: flex; flex-direction: column; padding: 2px 2px 0 3px; background: #f1f1f1; }
.sb-btn { flex: none; height: 15px; border: 1px solid #ababab; background: #fff; display: flex; align-items: center; justify-content: center; }
.sb-thumb { flex: none; height: 419px; background: #fff; border: 1px solid #ababab; border-top: 0; }
.sb-track { flex: 1; }
.tri-up { width: 0; height: 0; border: 4px solid transparent; border-top: 0; border-bottom: 4px solid #777; }
.tri-down { width: 0; height: 0; border: 4px solid transparent; border-bottom: 0; border-top: 4px solid #777; }
.tri-left { width: 0; height: 0; border: 4px solid transparent; border-left: 0; border-right: 4px solid #666; }
.tri-right { width: 0; height: 0; border: 4px solid transparent; border-right: 0; border-left: 4px solid #666; }

/* sheet tabs */
.sheetbar { flex: none; height: 28px; background: #f3f3f3; display: flex; align-items: flex-start; position: relative; }
.nav-l { margin: 10px 0 0 26px; width: 0; height: 0; border: 4px solid transparent; border-left: 0; border-right: 5px solid #c6c6c6; }
.nav-r { margin: 10px 0 0 24px; width: 0; height: 0; border: 4px solid transparent; border-right: 0; border-left: 5px solid #c6c6c6; }
.sheet-tab { margin: -1px 0 0 40px; width: 83px; height: 25px; background: #fff; border: 1px solid #9e9e9e; border-top-color: #fff; border-bottom: 3px solid #217346; text-align: center; font: bold 14px/25px Lato, "Liberation Sans", sans-serif; color: #217346; }
.addsheet { margin: 5px 0 0 33px; }
.hgrip { margin: 9px 0 0 588px; }
.hscroll { margin: 6px 0 0 13px; width: 510px; height: 16px; display: flex; background: #e9e9e9; }
.hb { flex: none; width: 15px; height: 16px; background: #fff; border: 1px solid #ababab; display: flex; align-items: center; justify-content: center; }
.h-gap1 { flex: none; width: 37px; }
.h-thumb { flex: none; width: 92px; height: 16px; background: #fff; border: 1px solid #ababab; }
.h-gap2 { flex: 1; }

/* status */
.status { flex: none; height: 21px; background: #217346; color: #e8f2ec; display: flex; align-items: center; font-size: 10.500px; line-height: 19px; position: relative; }
.st-a { margin: -2px 0 0 8px; }
.st-b { margin: -2px 0 0 31px; color: #fff; }
.st-right { margin-left: auto; display: flex; align-items: center; height: 21px; padding-right: 8px; }
.view { width: 38px; height: 20px; display: flex; align-items: center; justify-content: center; }
.view.on { background: #0f6637; }
.z-minus { margin-left: 3px; width: 6px; height: 2px; background: #fff; }
.z-slider { margin-left: 5px; width: 100px; height: 1px; background: #fff; position: relative; }
.z-slider i { position: absolute; left: 47px; top: -5px; width: 4px; height: 11px; background: #fff; }
.z-plus { margin-left: 4px; width: 8px; height: 8px; background: linear-gradient(#fff,#fff) center/8px 2px no-repeat, linear-gradient(#fff,#fff) center/2px 8px no-repeat; }
.z-val { margin: -1px 0 0 15px; font-size: 11px; color: #e8f2ec; }
.strip { flex: none; height: 2px; background: linear-gradient(to right, #b8c4d4 0 138px, #222 138px 195px, #b8c4d4 195px 262px, #222 262px 320px, #b8c4d4 320px 387px, #222 387px 400px, #b8c4d4 400px); }
```
